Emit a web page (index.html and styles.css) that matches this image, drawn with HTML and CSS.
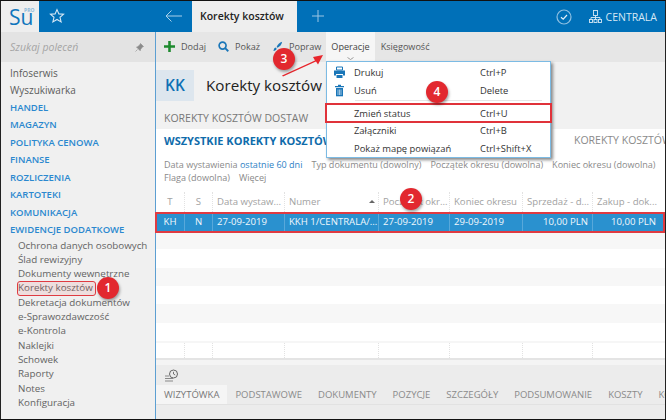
FILE: index.html
```html
<!DOCTYPE html>
<html lang="pl">
<head>
<meta charset="utf-8">
<title>Korekty kosztów</title>
<link rel="stylesheet" href="styles.css">
</head>
<body>
<div class="app">
  <header class="top">
    <div class="logo"><span class="su">Su</span><span class="pro">PRO</span></div>
    <div class="star"><svg width="16" height="16" viewBox="0 0 16 16"><path d="M8 1.600l1.900 4.300 4.600.4-3.500 3 1.100 4.600L8 11.500l-4.100 2.400L5 9.300l-3.500-3 4.600-.4z" fill="none" stroke="#d6e8f5" stroke-width="1.100"/></svg></div>
    <div class="back"><svg width="18" height="12" viewBox="0 0 18 12"><path d="M17 6H1M6.500.5L1 6l5.500 5.500" fill="none" stroke="#a9d0ea" stroke-width="1"/></svg></div>
    <div class="tab">Korekty kosztów</div>
    <div class="plus"><svg width="12" height="12" viewBox="0 0 12 12"><path d="M6 0v12M0 6h12" stroke="#9cc6e4" stroke-width="1"/></svg></div>
    <div class="status">
      <svg width="16" height="16" viewBox="0 0 16 16"><circle cx="8" cy="8" r="7" fill="none" stroke="#8fc0e2" stroke-width="1.200"/><path d="M5 8.200l2.200 2L11 6" fill="none" stroke="#e4f0f8" stroke-width="1.200"/></svg>
      <svg class="org" width="13" height="14" viewBox="0 0 13 14"><g fill="none" stroke="#d6e8f5" stroke-width=".9"><rect x="4.500" y=".5" width="4" height="5"/><rect x=".5" y="9.500" width="3" height="3"/><rect x="5" y="9.500" width="3" height="3"/><rect x="9.500" y="9.500" width="3" height="3"/><path d="M6.500 5.500v4M2 9.500V7.500h9v2"/></g></svg>
      <span class="centrala">CENTRALA</span>
    </div>
  </header>
  <div class="work">
    <aside class="side">
      <div class="search"><span>Szukaj poleceń</span><svg width="9" height="9" viewBox="0 0 9 9"><path d="M5.500.5l3 3-1.200.5-1.800 2.500-.3 1.200-3.700-3.700 1.200-.3L5 1.700zM2.500 6.500L.5 8.500" fill="#8a8a8a" stroke="#8a8a8a" stroke-width=".6"/></svg></div>
      <nav class="menu">
        <a class="plain">Infoserwis</a>
        <a class="plain">Wyszukiwarka</a>
        <a class="group">HANDEL</a>
        <a class="group">MAGAZYN</a>
        <a class="group">POLITYKA CENOWA</a>
        <a class="group">FINANSE</a>
        <a class="group">ROZLICZENIA</a>
        <a class="group">KARTOTEKI</a>
        <a class="group">KOMUNIKACJA</a>
        <a class="group">EWIDENCJE DODATKOWE</a>
        <div class="sub">
          <a>Ochrona danych osobowych</a>
          <a>Ślad rewizyjny</a>
          <a>Dokumenty wewnętrzne</a>
          <a class="current">Korekty kosztów</a>
          <a>Dekretacja dokumentów</a>
          <a>e-Sprawozdawczość</a>
          <a>e-Kontrola</a>
          <a>Naklejki</a>
          <a>Schowek</a>
          <a>Raporty</a>
          <a>Notes</a>
          <a>Konfiguracja</a>
        </div>
      </nav>
    </aside>
    <main class="main">
      <div class="toolbar">
        <span class="tool t-add"><svg width="11" height="11" viewBox="0 0 12 12"><path d="M6 0v12M0 6h12" stroke="#1e8a2e" stroke-width="2.800"/></svg>Dodaj</span>
        <span class="tool t-show"><svg width="11" height="11" viewBox="0 0 12 12"><circle cx="5" cy="5" r="3.800" fill="none" stroke="#1a76b8" stroke-width="1.800"/><path d="M7.800 7.800l3.400 3.400" stroke="#1a76b8" stroke-width="2"/></svg>Pokaż</span>
        <span class="tool t-edit"><svg width="11" height="11" viewBox="0 0 13 13"><path d="M12 1C9 2 6.500 4.500 5.500 7l1 1C9 7 11.500 4.500 12 1z" fill="#1a76b8"/><path d="M4.800 7.800c-1.500 0-2.300 1-2.600 2.200L1.500 11.500c1.500.3 3.200-.2 4-2z" fill="#1a76b8"/></svg>Popraw</span>
        <span class="tool active">Operacje<svg class="chev" width="7" height="3" viewBox="0 0 7 3"><path d="M.5.5l3 2 3-2" fill="none" stroke="#888" stroke-width=".8"/></svg></span>
        <span class="tool">Księgowość</span>
      </div>
      <div class="title-row"><div class="badge-kk">KK</div><h1>Korekty kosztów</h1></div>
      <div class="subtabs"><span>KOREKTY KOSZTÓW DOSTAW</span></div>
      <div class="panel">
        <div class="views"><b>WSZYSTKIE KOREKTY KOSZTÓW</b><span>KOREKTY KOSZTÓW</span></div>
        <div class="filters">
          <div class="f1"><span>Data wystawienia <i>ostatnie 60 dni</i></span><span>Typ dokumentu (dowolny)</span><span>Początek okresu (dowolna)</span><span>Koniec okresu (dowolna)</span></div>
          <div class="f2"><span>Flaga (dowolna)</span><span>Więcej</span></div>
        </div>
        <div class="grid">
          <div class="row head"><span>T</span><span>S</span><span>Data wystaw...</span><span class="sorted">Numer<em></em></span><span>Początek okr...</span><span>Koniec okresu</span><span>Sprzedaż - d...</span><span>Zakup - dok...</span></div>
          <div class="row sel"><span>KH</span><span>N</span><span>27-09-2019</span><span>KKH 1/CENTRALA/...</span><span>27-09-2019</span><span>29-09-2019</span><span class="num">10,00 PLN</span><span class="num">10,00 PLN</span></div>
          <div class="row alt"></div><div class="row"></div><div class="row alt"></div><div class="row"></div><div class="row alt"></div><div class="row"></div>
          <div class="row tail"><span></span><span></span><span></span><span></span><span></span><span></span><span></span><span></span></div>
        </div>
      </div>
      <div class="bottom">
        <div class="dock">
          <div class="hist"><svg width="15" height="14" viewBox="0 0 15 14"><circle cx="9.500" cy="5" r="4" fill="none" stroke="#666" stroke-width="1"/><path d="M9.500 2.800V5l1.700 1" fill="none" stroke="#666" stroke-width=".9"/><path d="M1 7h4M1 9.500h8M1 12h8" stroke="#888" stroke-width="1"/></svg></div>
          <div class="btabs"><span class="on">WIZYTÓWKA</span><span>PODSTAWOWE</span><span>DOKUMENTY</span><span>POZYCJE</span><span>SZCZEGÓŁY</span><span>PODSUMOWANIE</span><span>KOSZTY</span><span>KONTROLA</span></div>
        </div>
      </div>
    </main>
  </div>

  <div class="dropdown">
    <div class="mi"><svg width="13" height="13" viewBox="0 0 13 13"><path d="M3.500 1h6v3h-6z" fill="none" stroke="#1a76b8"/><path d="M1 4.500h11v5H10V8H3v1.500H1z" fill="#1a76b8"/><path d="M3.500 9h6v3h-6z" fill="#1a76b8"/></svg><span>Drukuj</span><kbd>Ctrl+P</kbd></div>
    <div class="mi"><svg width="13" height="13" viewBox="0 0 13 13"><path d="M2 2h9v1.300H2zM5 .7h3V2H5z" fill="#1a76b8"/><path d="M3 4h7v8.300H3z" fill="#1a76b8"/><path d="M5 5.500v5.500M6.500 5.500v5.500M8 5.500v5.500" stroke="#fff" stroke-width=".6"/></svg><span>Usuń</span><kbd>Delete</kbd></div>
    <div class="sep"></div>
    <div class="mi hot"><i></i><span>Zmień status</span><kbd>Ctrl+U</kbd></div>
    <div class="mi"><i></i><span>Załączniki</span><kbd>Ctrl+B</kbd></div>
    <div class="mi"><i></i><span>Pokaż mapę powiązań</span><kbd>Ctrl+Shift+X</kbd></div>
  </div>

  <div class="mark box-side"></div>
  <div class="mark box-row"></div>
  <div class="dot d1">1</div>
  <div class="dot d2">2</div>
  <svg class="arrow" width="42" height="24" viewBox="0 0 42 24"><path d="M0 21.500L33 6.500 31 3 41 1 36 10.500 34 7.500 1 22.500z" fill="#e8262c"/></svg>
  <div class="dot d3">3</div>
  <div class="dot d4">4</div>
</div>
</body>
</html>
```
FILE: styles.css
```css
* { box-sizing: border-box; }
html, body { margin: 0; padding: 0; }
body { font-family: "Open Sans", "Noto Sans", sans-serif; font-size: 10px; color: #555; }
.app { position: relative; width: 666px; height: 420px; overflow: hidden; background: #f1f1f1; border-top: 1px solid #111; border-bottom: 1px solid #111; display: flex; flex-direction: column; }
.app::before, .app::after { content: ""; position: absolute; top: 0; bottom: 0; width: 1px; background: #222; z-index: 6; }
.app::before { left: 0; }
.app::after { right: 0; }

.top { height: 31px; flex: none; display: flex; align-items: stretch; background: #0070b8; }
.logo { width: 39px; background: #eeeeee; position: relative; padding-left: 9px; }
.su { font-size: 21px; line-height: 32px; color: #0f75bc; }
.pro { position: absolute; left: 24px; top: 6px; font-size: 5px; color: #8bb8d8; font-weight: 700; }
.star { width: 40px; padding: 7px 0 0 10px; }
.back { width: 113px; padding: 9px 0 0 86px; }
.tab { width: 105px; background: #eeeeee; color: #222; font-size: 10.500px; font-weight: 600; line-height: 30px; padding-left: 8px; }
.plus { width: 40px; padding: 9px 0 0 15px; }
.status { flex: 1; display: flex; align-items: center; justify-content: flex-end; padding-right: 9px; color: #d6e8f5; }
.org { margin-left: 17px; margin-right: 4px; }
.centrala { font-size: 10.500px; }

.work { flex: 1; display: flex; min-height: 0; }
.side { width: 156px; flex: none; background: #f0f0f0; border-right: 1px solid #5c9fd2; }
.search { height: 30px; background: #e3e3e3; padding: 0 11px 0 10px; display: flex; align-items: center; justify-content: space-between; }
.search span { font-style: italic; font-size: 10.500px; color: #a5a5a5; }
.menu { padding-top: 3px; }
.menu a { display: block; white-space: nowrap; }
.plain, .group { padding-left: 10px; }
.plain { height: 16.800px; line-height: 16.800px; font-size: 10px; color: #5c5c5c; }
.group { height: 17.500px; line-height: 17.500px; color: #2b88cf; font-weight: 600; font-size: 9.500px; }
.sub a { height: 14.300px; line-height: 14.300px; padding-left: 18px; font-size: 9.800px; color: #636363; }

.main { flex: 1; min-width: 0; display: flex; flex-direction: column; background: #f1f1f1; }
.toolbar { height: 30px; flex: none; background: #e6e6e6; display: flex; padding-left: 8px; }
.tool { display: flex; align-items: center; gap: 6px; font-size: 9.100px; color: #555; margin-right: 12px; padding-bottom: 2px; white-space: nowrap; }
.t-edit { margin-right: 5px; }
.tool.active { position: relative; background: #f6f6f6; margin-right: 6px; padding: 0 5px 2px 5px; color: #444; }
.chev { position: absolute; left: 21px; top: 25px; }
.title-row { height: 46px; flex: none; display: flex; align-items: center; }
.badge-kk { width: 38px; height: 31px; background: #dde6ee; color: #0f70b5; font-size: 15.500px; font-weight: 600; text-align: center; line-height: 31px; }
h1 { margin: 0 0 0 12px; font-size: 15.200px; font-weight: 400; color: #222; white-space: nowrap; }
.subtabs { height: 21px; flex: none; padding: 3px 0 0 8px; font-size: 10.500px; color: #777; white-space: nowrap; }
.panel { flex: none; background: #fff; overflow: hidden; }
.views { height: 25px; position: relative; padding: 4px 0 0 8px; white-space: nowrap; }
.views b { color: #0f6cab; font-size: 11px; font-weight: 700; }
.views span { position: absolute; left: 418px; top: 4px; color: #8a8a8a; font-size: 10.500px; }
.filters { height: 38px; padding: 4px 0 0 8px; color: #8a8a8a; font-size: 9.050px; line-height: 13px; white-space: nowrap; }
.f1, .f2 { display: flex; gap: 9px; }
.filters i { font-style: normal; color: #2d7fc5; }
.row { height: 18.330px; display: grid; grid-template-columns: 28px 28px 72px 94px 71px 73px 70px 68px; font-size: 9.600px; background: #fff; }
.row.alt { background: #f7f7f7; }
.row span { padding: 0 4px; line-height: 19px; white-space: nowrap; overflow: hidden; border-left: 1px dotted #e2e2e2; }
.row span:first-child { border-left: 0; }
.row span:nth-child(-n+2) { text-align: center; }
.head { height: 20px; color: #a2a2a2; }
.head span { line-height: 20px; }
.sorted { position: relative; }
.sorted em { position: absolute; right: 3px; top: 8px; border: 3px solid transparent; border-top: 0; border-bottom: 3px solid #666; }
.sel { background: #2a91cf; color: #f2f8fc; height: 19px; }
.sel span { border-left: 1px solid #58a8da; }
.tail { height: 17px; border-top: 2px solid #f6f6f6; }
.num { text-align: right; }

.bottom { flex: 1; background: #f4f4f4; border-top: 2px solid #e4e4e4; display: flex; flex-direction: column; }
.dock { flex: 1; margin-top: 5px; background: #ececec; }
.hist { height: 20px; padding: 4px 0 0 8px; }
.btabs { display: flex; height: 20px; border-bottom: 1px solid #e2e2e2; font-size: 9.500px; font-weight: 500; color: #8a8a8a; white-space: nowrap; overflow: hidden; }
.btabs span { padding: 0 8px; line-height: 20px; }
.btabs .on { background: #f5f5f5; color: #777; }

.dropdown { position: absolute; left: 326px; top: 60px; width: 225px; height: 97px; background: #fff; border: 1px solid #7cbbe4; box-shadow: 2px 2px 3px #888; z-index: 2; padding-top: 2px; color: #333; font-size: 9.400px; }
.mi { height: 17.700px; display: flex; align-items: center; padding-left: 6px; white-space: nowrap; }
.mi svg, .mi i { width: 13px; flex: none; margin-right: 8px; }
.mi span { width: 126px; }
.mi kbd { font: inherit; }
.sep { height: 1px; margin: 1px 8px 3px 28px; background: #e6e6e6; }
.hot { outline: 2px solid #e0323a; outline-offset: -1px; margin: 0 -1px; padding-left: 7px; }

.mark { position: absolute; border: 2px solid #df3b42; z-index: 3; }
.box-side { left: 17px; top: 280px; width: 79px; height: 15px; border-radius: 3px; background: rgba(230,100,100,.12); border-width: 1px; }
.box-row { left: 155px; top: 211px; width: 510px; height: 21px; }
.dot { position: absolute; z-index: 4; width: 22px; height: 22px; border-radius: 50%; background: #e2282f; color: #fff; font-size: 12px; font-weight: 600; text-align: center; line-height: 22px; box-shadow: 1px 2px 3px rgba(0,0,0,.35); }
.d1 { left: 97px; top: 276px; }
.d2 { left: 400px; top: 187px; }
.d3 { left: 273px; top: 47px; }
.d4 { left: 426px; top: 80px; }
.arrow { position: absolute; left: 282px; top: 53px; z-index: 3; }
```
